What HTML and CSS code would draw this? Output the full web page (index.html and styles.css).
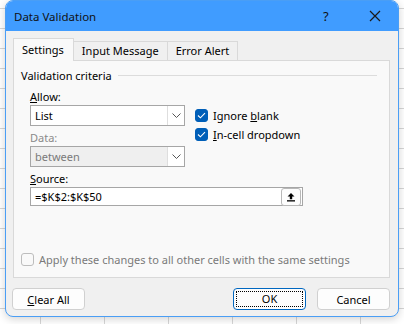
FILE: index.html
```html
<!DOCTYPE html>
<html lang="en">
<head>
    <meta charset="UTF-8">
    <title>Data Validation</title>
    <link rel="stylesheet" href="styles.css">
</head>
<body>
    <div class="dialog">
        <div class="titlebar">
            <span class="title">Data Validation</span>
            <span class="help">?</span>
            <span class="close">
                <svg width="12" height="12" viewBox="0 0 12 12"><path d="M1 1L11 11M11 1L1 11" stroke="#1a1a1a" stroke-width="1.2" fill="none"/></svg>
            </span>
        </div>
        <div class="content">
            <div class="tabs">
                <div class="tab active">Settings</div>
                <div class="tab">Input Message</div>
                <div class="tab">Error Alert</div>
            </div>
            <div class="panel">
                <div class="group-title"><span>Validation criteria</span><span class="rule"></span></div>
                <div class="criteria">
                    <div class="fields">
                        <div class="label"><u>A</u>llow:</div>
                        <div class="select">
                            <span class="value">List</span>
                            <span class="drop"><svg width="9" height="5" viewBox="0 0 9 5"><path d="M0.5 0.5L4.5 4.5L8.5 0.5" stroke="#555" fill="none"/></svg></span>
                        </div>
                        <div class="label disabled">Data:</div>
                        <div class="select off">
                            <span class="value">between</span>
                            <span class="drop"><svg width="9" height="5" viewBox="0 0 9 5"><path d="M0.5 0.5L4.5 4.5L8.5 0.5" stroke="#555" fill="none"/></svg></span>
                        </div>
                    </div>
                    <div class="checks">
                        <div class="check">
                            <span class="box on"><svg width="9" height="7" viewBox="0 0 9 7"><path d="M1 3.5L3.4 5.8L8 1.2" stroke="#fff" stroke-width="1.1" fill="none"/></svg></span>
                            <span>Ignore <u>b</u>lank</span>
                        </div>
                        <div class="check">
                            <span class="box on"><svg width="9" height="7" viewBox="0 0 9 7"><path d="M1 3.5L3.4 5.8L8 1.2" stroke="#fff" stroke-width="1.1" fill="none"/></svg></span>
                            <span><u>I</u>n-cell dropdown</span>
                        </div>
                    </div>
                </div>
                <div class="label source-label"><u>S</u>ource:</div>
                <div class="source">
                    <span class="value">=$K$2:$K$50</span>
                    <span class="pick"><svg width="10" height="10" viewBox="0 0 10 10"><path d="M5 1L1.5 4.5H3.8V7.2H6.2V4.5H8.5Z" fill="#000"/><rect x="1" y="8.2" width="8" height="1.3" fill="#000"/></svg></span>
                </div>
                <div class="apply">
                    <span class="box"></span>
                    <span>Apply these changes to all other cells with the same settings</span>
                </div>
            </div>
            <div class="footer">
                <div class="btn"><u>C</u>lear All</div>
                <div class="spacer"></div>
                <div class="btn default"><span class="focus">OK</span></div>
                <div class="btn">Cancel</div>
            </div>
        </div>
    </div>
</body>
</html>
```

FILE: styles.css
```css
body {
    margin: 0;
    width: 404px;
    height: 324px;
    overflow: hidden;
    font-family: "Noto Sans", "Open Sans", sans-serif;
    font-size: 11px;
    color: #000;
    background-color: #fff;
    background-image: linear-gradient(to right, #d6d6d6 1px, transparent 1px),
                      linear-gradient(to bottom, #d6d6d6 1px, transparent 1px);
    background-size: 64px 20px;
    background-position: 40px 8px;
}

.dialog {
    margin-left: 5px;
    width: 392px;
    height: 315px;
    border: 1px solid #4a9ef5;
    border-radius: 8px;
    background: #f0f0f0;
    overflow: hidden;
    box-shadow: 0 2px 8px rgba(0, 0, 0, 0.18);
}

/* title bar */
.titlebar {
    height: 30px;
    background: #409cff;
    display: flex;
    align-items: center;
    padding-left: 8px;
}

.title {
    flex: 1;
    font-size: 11.5px;
    color: #111;
}

.help {
    width: 12px;
    font-size: 13px;
    color: #111;
    margin-right: 34px;
}

.close {
    display: flex;
    margin-right: 17px;
}

.content {
    padding: 7px 8px 0 7px;
}

/* tabs */
.tabs {
    display: flex;
    align-items: flex-end;
    height: 22px;
}

.tab {
    height: 18px;
    line-height: 18px;
    padding: 0 8px;
    border: 1px solid #d9d9d9;
    border-bottom: none;
    border-left: none;
    background: #f0f0f0;
}

.tab.active {
    height: 22px;
    line-height: 21px;
    padding: 0 9px 0 8px;
    border-left: 1px solid #d9d9d9;
    background: #f9f9f9;
    position: relative;
    top: 1px;
}

.panel {
    height: 202px;
    border: 1px solid #d9d9d9;
    background: #f9f9f9;
    padding: 7px 7px 7px 7px;
    display: flex;
    flex-direction: column;
}

.group-title {
    display: flex;
    align-items: center;
    line-height: 15px;
}

.group-title .rule {
    flex: 1;
    height: 1px;
    background: #dcdcdc;
    margin-left: 6px;
    margin-right: 5px;
}

.criteria {
    display: flex;
    padding-left: 9px;
}

.fields {
    width: 155px;
}

.label {
    line-height: 15px;
    margin-top: 6px;
    margin-bottom: 1px;
}

.label.disabled {
    color: #8a8a8a;
    margin-top: 4px;
}

.select {
    height: 19px;
    border: 1px solid #a6a6a6;
    background: #fff;
    display: flex;
    align-items: center;
}

.select .value {
    flex: 1;
    padding-left: 4px;
}

.select .drop {
    width: 16px;
    height: 19px;
    border-left: 1px solid #dedede;
    display: flex;
    align-items: center;
    justify-content: center;
}

.select.off {
    background: #efefef;
    color: #7a7a7a;
}

.select.off .drop {
    background: #fff;
}

.checks {
    margin-left: 10px;
    padding-top: 23px;
}

.check {
    display: flex;
    align-items: center;
    height: 19px;
}

.box {
    width: 11px;
    height: 11px;
    border: 1px solid #8c8c8c;
    border-radius: 3px;
    margin-right: 5px;
    display: flex;
    align-items: center;
    justify-content: center;
    background: #fdfdfd;
}

.box.on {
    background: #005fb8;
    border-color: #005fb8;
}

.source-label {
    margin-left: 9px;
    margin-top: 4px;
}

.source {
    margin-left: 9px;
    width: 271px;
    height: 17px;
    border: 1px solid #a6a6a6;
    background: #fff;
    display: flex;
    align-items: center;
}

.source .value {
    flex: 1;
    padding-left: 4px;
}

.pick {
    width: 18px;
    height: 16px;
    border: 1px solid #b8b8b8;
    border-radius: 3px;
    background: #fdfdfd;
    display: flex;
    align-items: center;
    justify-content: center;
    margin-right: 1px;
}

.apply {
    margin-top: auto;
    display: flex;
    align-items: center;
    color: #7a7a7a;
    height: 16px;
    margin-bottom: 3px;
}

.apply .box {
    border-color: #bdbdbd;
    background: #f9f9f9;
}

/* footer buttons */
.footer {
    display: flex;
    gap: 11px;
    margin-top: 10px;
}

.spacer {
    flex: 1;
}

.btn {
    width: 71px;
    height: 20px;
    border: 1px solid #d0d0d0;
    border-radius: 4px;
    background: #fdfdfd;
    display: flex;
    align-items: center;
    justify-content: center;
}

.btn:first-child {
    margin-left: -1px;
}

.btn.default {
    border-color: #0067c0;
}

.btn .focus {
    width: 65px;
    height: 14px;
    line-height: 14px;
    text-align: center;
    outline: 1px dotted #000;
}
```
